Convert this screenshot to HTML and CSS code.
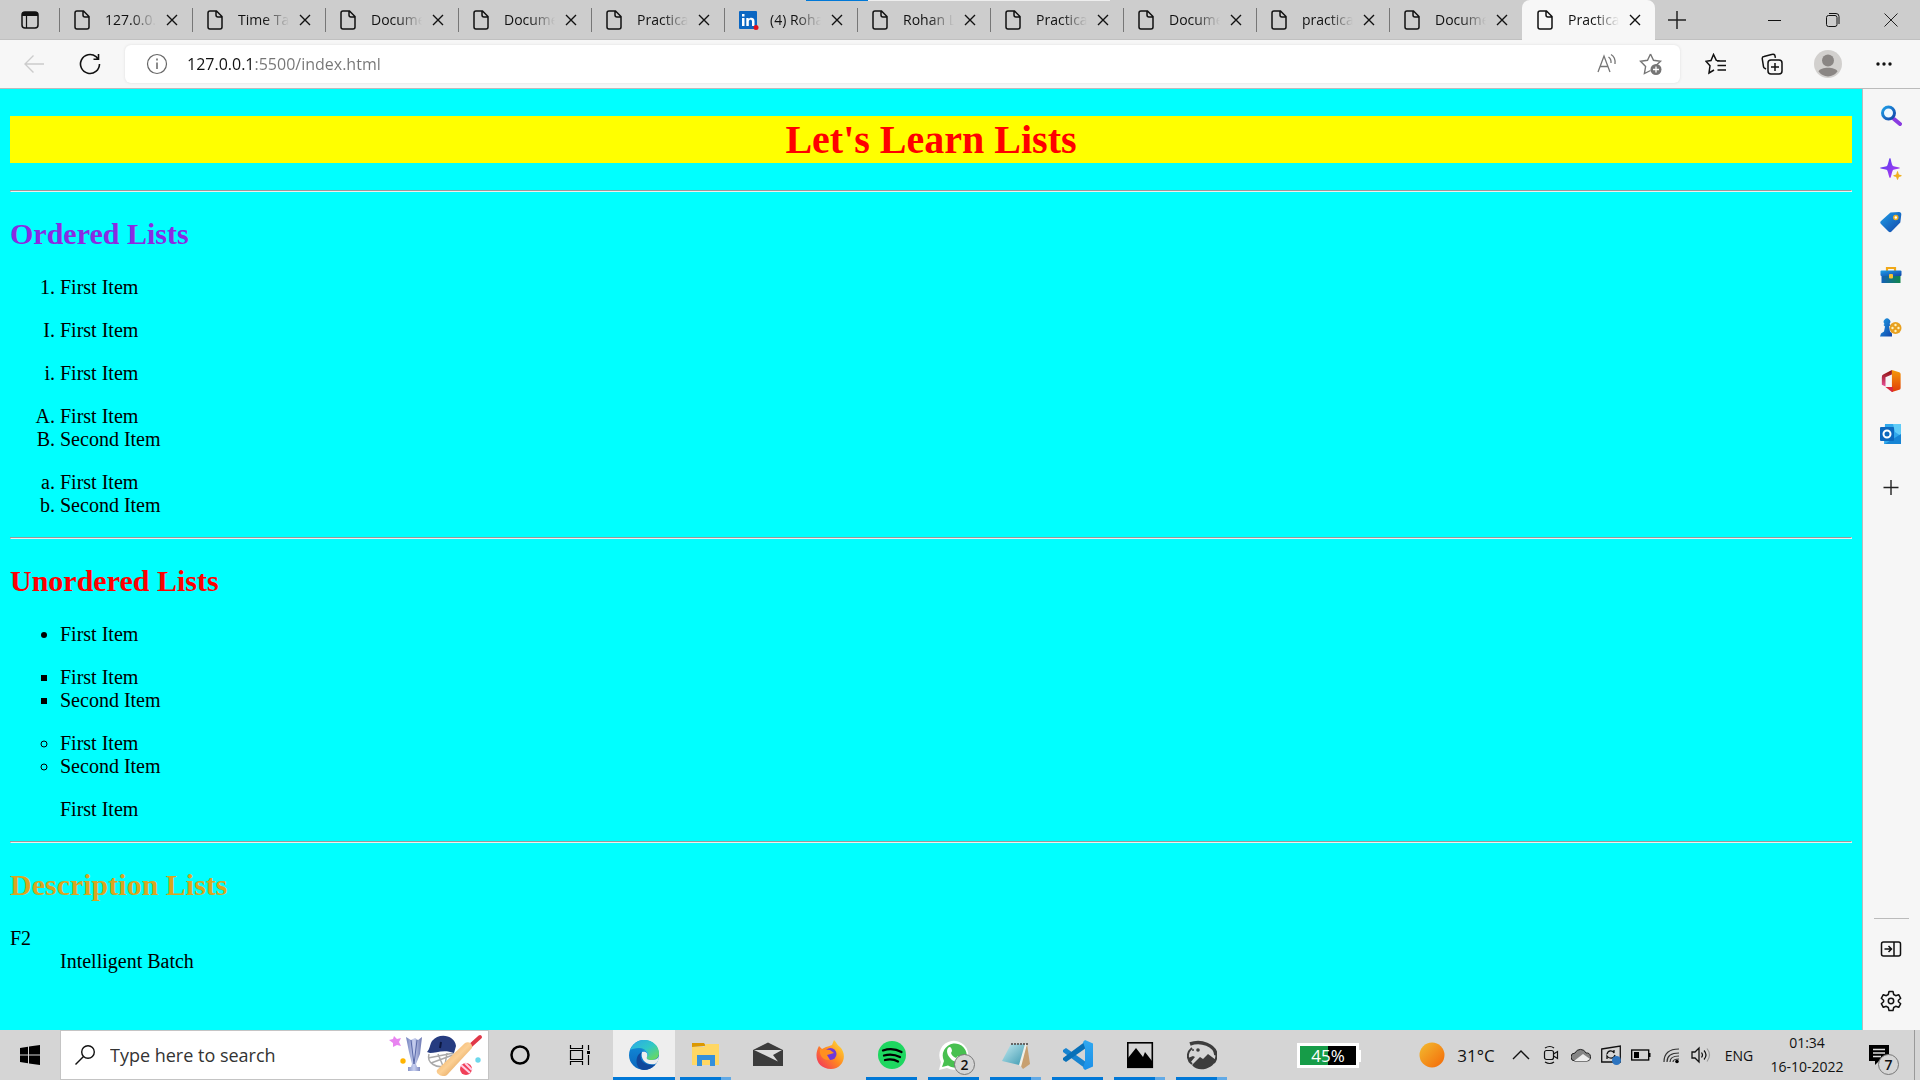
FILE: index.html
```html
<!DOCTYPE html>
<html lang="en">
<head>
<meta charset="utf-8">
<title>Practical - Lists</title>
<link rel="stylesheet" href="styles.css">
</head>
<body>
<svg class="defs" aria-hidden="true">
  <defs>
    <symbol id="file" viewBox="0 0 16 20"><path d="M3 1h6.500L15 6.500V17a2 2 0 0 1-2 2H3a2 2 0 0 1-2-2V3a2 2 0 0 1 2-2zM9 1v4a2 2 0 0 0 2 2h4" fill="none" stroke="#111" stroke-width="1.500"/></symbol>
    <symbol id="x" viewBox="0 0 12 12"><path d="M1 1l10 10M11 1L1 11" fill="none" stroke="#111" stroke-width="1.400"/></symbol>
    <linearGradient id="gBlue" x2="1" y2="1"><stop stop-color="#1fa0e8"/><stop offset="1" stop-color="#1243a8"/></linearGradient>
    <linearGradient id="gPurple" x2="1" y2="1"><stop stop-color="#4a3cf0"/><stop offset="1" stop-color="#c03cf0"/></linearGradient>
    <linearGradient id="gBox" x2="1"><stop stop-color="#1460b8"/><stop offset="1" stop-color="#10864a"/></linearGradient>
    <linearGradient id="gOffice" x2="0" y2="1"><stop stop-color="#f59a08"/><stop offset="1" stop-color="#e03c08"/></linearGradient>
    <linearGradient id="gOffice2" x2="0" y2="1"><stop stop-color="#8c1008"/><stop offset="1" stop-color="#e8509a"/></linearGradient>
    <linearGradient id="gEdge" x2="1" y2="1"><stop stop-color="#2aa8e8"/><stop offset=".5" stop-color="#30c8c8"/><stop offset="1" stop-color="#78dc48"/></linearGradient>
    <linearGradient id="gEdge2" x2="0" y2="1"><stop stop-color="#1290dc"/><stop offset="1" stop-color="#0c66bc"/></linearGradient>
    <linearGradient id="gFire" x1="1" y1="0" x2="0" y2="1"><stop stop-color="#ffe83c"/><stop offset=".5" stop-color="#ff8820"/><stop offset="1" stop-color="#f02868"/></linearGradient>
    <linearGradient id="gSun" x2="1" y2="1"><stop stop-color="#f2bc30"/><stop offset="1" stop-color="#f46808"/></linearGradient>
    <linearGradient id="gNote" x2="1" y2="1"><stop stop-color="#c4ecf2"/><stop offset="1" stop-color="#3c98b0"/></linearGradient>
    <linearGradient id="gBat" x2="1" y2="1"><stop stop-color="#e89a48"/><stop offset=".5" stop-color="#fcd094"/><stop offset="1" stop-color="#c87828"/></linearGradient>
    <linearGradient id="gCup" x2="1"><stop stop-color="#7080bc"/><stop offset=".5" stop-color="#c8d0f0"/><stop offset="1" stop-color="#6874b0"/></linearGradient>
    <linearGradient id="gCode" x2="0" y2="1"><stop stop-color="#30a8f0"/><stop offset="1" stop-color="#1c90e8"/></linearGradient>
  </defs>
</svg>

<header class="browser">
  <div class="tabstrip">
    <button class="tabmenu" aria-label="Tab actions"><svg width="18" height="18" viewBox="0 0 18 18"><rect x="1" y="1" width="16" height="16" rx="3" fill="none" stroke="#111" stroke-width="1.500"/><path d="M1 5V3a2 2 0 0 1 2-2h12a2 2 0 0 1 2 2v2z" fill="#111"/><path d="M5.500 5v12" stroke="#111" stroke-width="1.200"/></svg></button>
    <nav class="tabs">
      <div class="tab"><svg class="fav"><use href="#file"/></svg><a href="#t1">127.0.0.</a><button aria-label="Close"><svg><use href="#x"/></svg></button></div>
      <div class="tab"><svg class="fav"><use href="#file"/></svg><a href="#t2">Time Ta</a><button aria-label="Close"><svg><use href="#x"/></svg></button></div>
      <div class="tab"><svg class="fav"><use href="#file"/></svg><a href="#t3">Docume</a><button aria-label="Close"><svg><use href="#x"/></svg></button></div>
      <div class="tab"><svg class="fav"><use href="#file"/></svg><a href="#t4">Docume</a><button aria-label="Close"><svg><use href="#x"/></svg></button></div>
      <div class="tab"><svg class="fav"><use href="#file"/></svg><a href="#t5">Practica</a><button aria-label="Close"><svg><use href="#x"/></svg></button></div>
      <div class="tab"><svg class="fav linkedin" viewBox="0 0 20 20"><rect width="18" height="18" y="1" rx="1" fill="#0a66c2"/><path d="M3 8h2.500v8H3zM3 4h2.500v2.500H3zM7.300 8h2.400v1.200C11 7 15.500 7.200 15.500 11v5H13v-4.500c0-2.400-3.200-2.200-3.200 0V16H7.300z" fill="#fff"/><circle cx="17" cy="17.500" r="2.500" fill="#e0101c"/></svg><a href="#t6">(4) Roha</a><button aria-label="Close"><svg><use href="#x"/></svg></button></div>
      <div class="tab"><svg class="fav"><use href="#file"/></svg><a href="#t7">Rohan L</a><button aria-label="Close"><svg><use href="#x"/></svg></button></div>
      <div class="tab"><svg class="fav"><use href="#file"/></svg><a href="#t8">Practica</a><button aria-label="Close"><svg><use href="#x"/></svg></button></div>
      <div class="tab"><svg class="fav"><use href="#file"/></svg><a href="#t9">Docume</a><button aria-label="Close"><svg><use href="#x"/></svg></button></div>
      <div class="tab"><svg class="fav"><use href="#file"/></svg><a href="#t10">practica</a><button aria-label="Close"><svg><use href="#x"/></svg></button></div>
      <div class="tab"><svg class="fav"><use href="#file"/></svg><a href="#t11">Docume</a><button aria-label="Close"><svg><use href="#x"/></svg></button></div>
      <div class="tab active"><svg class="fav"><use href="#file"/></svg><a href="#t12">Practica</a><button aria-label="Close"><svg><use href="#x"/></svg></button></div>
    </nav>
    <button class="newtab" aria-label="New tab"><svg width="18" height="18" viewBox="0 0 18 18"><path d="M9 0v18M0 9h18" stroke="#222" stroke-width="1.500"/></svg></button>
    <div class="winctl">
      <button aria-label="Minimize"><svg width="14" height="14" viewBox="0 0 14 14"><path d="M0 7.500h13" stroke="#111"/></svg></button>
      <button aria-label="Restore"><svg width="14" height="14" viewBox="0 0 14 14"><rect x=".5" y="2.500" width="10.500" height="11" rx="2" fill="none" stroke="#111"/><path d="M3 .5h7a3 3 0 0 1 3 3V11" fill="none" stroke="#111"/></svg></button>
      <button aria-label="Close window"><svg width="14" height="14" viewBox="0 0 14 14"><path d="M.5.500l13 13M13.500.500l-13 13" stroke="#222"/></svg></button>
    </div>
    <div class="progress"><span></span></div>
  </div>

  <div class="toolbar">
    <button aria-label="Back"><svg width="20" height="18" viewBox="0 0 20 18"><path d="M20 9H1M9.500.500L1 9l8.500 8.500" fill="none" stroke="#ccc" stroke-width="1.400"/></svg></button>
    <button aria-label="Refresh"><svg width="22" height="22" viewBox="0 0 22 22"><path d="M20.500 11A9.500 9.500 0 1 1 17 3.600L19 6M19.500 1v5.200h-5" fill="none" stroke="#111" stroke-width="1.600"/></svg></button>
    <div class="address">
      <button aria-label="Site information"><svg width="22" height="22" viewBox="0 0 22 22"><circle cx="11" cy="11" r="9.500" fill="none" stroke="#666" stroke-width="1.200"/><path d="M11 9.500V16M11 5.500v2" stroke="#666" stroke-width="1.500"/></svg></button>
      <input class="url" type="text" value="127.0.0.1:5500/index.html" aria-label="Address">
      <button aria-label="Read aloud"><svg width="20" height="22" viewBox="0 0 20 22"><path d="M1 19L7 3l6 16M3.200 13.500h7.600M11.500 4c2 1.500 2.800 3.500 2.500 6M14 1.500c3.500 2 4.500 5 4 9.500" fill="none" stroke="#757575" stroke-width="1.300"/></svg></button>
      <button aria-label="Add to favorites"><svg width="24" height="24" viewBox="0 0 24 24"><path d="M11.500 2l3 6.300 7 1-5 4.700M11.500 18.500L5.400 21.600l1.200-7L1.500 9.300l7-1 3-6.300" fill="none" stroke="#757575" stroke-width="1.400"/><circle cx="17" cy="17.500" r="5.500" fill="#757575"/><path d="M17 14.500v6M14 17.500h6" stroke="#fff" stroke-width="1.300"/></svg></button>
    </div>
    <div class="actions">
      <button aria-label="Favorites"><svg width="22" height="22" viewBox="0 0 22 22"><path d="M14.500 7.800l-3.200-.4L8.500 1.500 6 7.500l-5 .8 4 4.500-1 7.200 5-3M12 8h9M12.500 12.500H21M12.500 17H21" fill="none" stroke="#111" stroke-width="1.500"/></svg></button>
      <button aria-label="Collections"><svg width="22" height="22" viewBox="0 0 22 22"><rect x="7" y="7" width="14" height="14" rx="3" fill="none" stroke="#111" stroke-width="1.500"/><path d="M14 10v8M10 14h8M5 16l-1.500-.8a2 2 0 0 1-1-1.500L1.200 5.500a2 2 0 0 1 1.800-2L11.500 1.300a2 2 0 0 1 2.500 1.500l.4 2" fill="none" stroke="#111" stroke-width="1.500"/></svg></button>
      <button aria-label="Profile"><svg width="28" height="28" viewBox="0 0 28 28"><circle cx="14" cy="14" r="14" fill="#d2d0ce"/><circle cx="14" cy="10.500" r="6" fill="#8a8684"/><path d="M4.500 21.500c2-5 17-5 19 0A13 13 0 0 1 14 26.500a13 13 0 0 1-9.500-5z" fill="#8a8684"/></svg></button>
      <button aria-label="Settings and more"><svg width="18" height="6" viewBox="0 0 18 6"><g fill="#111"><circle cx="3" cy="3" r="1.700"/><circle cx="9" cy="3" r="1.700"/><circle cx="15" cy="3" r="1.700"/></g></svg></button>
    </div>
  </div>
</header>

<div class="workspace">
  <main class="page">
    <h1>Let's Learn Lists</h1>
    <hr>
    <h2 class="ordered">Ordered Lists</h2>
    <ol><li>First Item</li></ol>
    <ol type="I"><li>First Item</li></ol>
    <ol type="i"><li>First Item</li></ol>
    <ol type="A"><li>First Item</li><li>Second Item</li></ol>
    <ol type="a"><li>First Item</li><li>Second Item</li></ol>
    <hr>
    <h2 class="unordered">Unordered Lists</h2>
    <ul><li>First Item</li></ul>
    <ul class="square"><li>First Item</li><li>Second Item</li></ul>
    <ul class="circle"><li>First Item</li><li>Second Item</li></ul>
    <ul class="plain"><li>First Item</li></ul>
    <hr>
    <h2 class="description">Description Lists</h2>
    <dl><dt>F2</dt><dd>Intelligent Batch</dd></dl>
  </main>

  <aside class="sidebar">
    <button aria-label="Search"><svg viewBox="0 0 22 22"><path d="M14 14l6 5" stroke="#8a3ce0" stroke-width="4" stroke-linecap="round"/><circle cx="8.500" cy="8" r="6" fill="#eef8ff" stroke="url(#gBlue)" stroke-width="3"/></svg></button>
    <button aria-label="Discover"><svg viewBox="0 0 22 22"><path d="M10 0c1 0 1.500 7 3 8s7 1 7 2-6 1-7 2-2 8-3 8-2-7-3-8-7-1-7-2 6-1 7-2 2-8 3-8z" fill="url(#gPurple)"/><path d="M17.500 13c.6 0 1 3 1.500 3.500s3 .7 3 1.300-2.500.7-3 1.200-.9 3-1.500 3-.9-2.500-1.400-3-3.100-.6-3.100-1.200 2.600-.8 3.100-1.300.8-3.500 1.400-3.500z" fill="#f0b020"/></svg></button>
    <button aria-label="Shopping"><svg viewBox="0 0 22 22"><path d="M10.500 1.500L19 1c1.500 0 2.500 1 2.300 2.500l-1 8-8.800 9c-1 1-2 1-3 0L1 13c-1-1-1-2 0-3z" fill="url(#gBlue)"/><circle cx="15.800" cy="6.500" r="2" fill="#fff" stroke="#f0b020" stroke-width="1.500"/></svg></button>
    <button aria-label="Tools"><svg viewBox="0 0 22 22"><path d="M7 7V4h8v3" fill="none" stroke="#f0a818" stroke-width="2.200"/><path d="M1.500 11h19v8h-19z" fill="url(#gBox)"/><rect x=".5" y="6.500" width="21" height="5.500" rx="1" fill="url(#gBlue)"/><rect x="9" y="10" width="4" height="4.500" rx="1" fill="#f8c030"/></svg></button>
    <button aria-label="Games"><svg viewBox="0 0 22 22"><circle cx="15.500" cy="11" r="6" fill="#e8a020"/><g fill="#fff3c0"><circle cx="15.500" cy="8" r="1.200"/><circle cx="15.500" cy="14" r="1.200"/><circle cx="12.500" cy="11" r="1.200"/><circle cx="18.500" cy="11" r="1.200"/></g><path d="M0 19.500l1-3 3-2 1-5-1.500-1.500 1-1a3.300 3.300 0 1 1 5 0l1 1L9 9.500l1 5 2 2v3z" fill="url(#gBlue)"/></svg></button>
    <button aria-label="Office"><svg viewBox="0 0 22 24"><path d="M12 0L3 4.500a3 3 0 0 0-2 3V16l4 2V8l7-3z" fill="url(#gOffice2)"/><path d="M12 0l8 2.500a2 2 0 0 1 1.500 2v15a2 2 0 0 1-1.500 2L12 24V19z" fill="url(#gOffice)"/><path d="M5 18.500h8V24h-1z" fill="#d82840"/></svg></button>
    <button aria-label="Outlook"><svg viewBox="0 0 22 22"><path d="M5 1h16v20H4z" fill="#30a8ec"/><path d="M13 1h8v12l-6-4z" fill="#60ccf8"/><path d="M21 11v10H5z" fill="#1684d4"/><rect y="4" width="14" height="14" rx="1" fill="#0c68be"/><circle cx="7" cy="11" r="3.500" fill="none" stroke="#fff" stroke-width="2"/></svg></button>
    <button aria-label="Add"><svg viewBox="0 0 22 22"><path d="M11 4v15M3.500 11.500h15" stroke="#222" stroke-width="1.400"/></svg></button>
    <div class="foot">
      <button aria-label="Hide sidebar"><svg viewBox="0 0 22 22"><rect x="1.500" y="4" width="19" height="14" rx="2" fill="none" stroke="#111" stroke-width="1.500"/><path d="M14 4v14M4.500 11h7M8.500 8l3 3-3 3" fill="none" stroke="#111" stroke-width="1.500"/></svg></button>
      <button aria-label="Settings"><svg viewBox="0 0 22 22"><path d="M9 1.500h4l.7 3 2 1.200 3-1 2 3.600-2.300 2v1.400l2.300 2-2 3.600-3-1-2 1.200-.7 3H9l-.7-3-2-1.200-3 1-2-3.600 2.300-2v-1.400l-2.300-2 2-3.600 3 1 2-1.200z" fill="none" stroke="#111" stroke-width="1.500" stroke-linejoin="round"/><circle cx="11" cy="11" r="2.700" fill="none" stroke="#111" stroke-width="1.500"/></svg></button>
    </div>
  </aside>
</div>

<footer class="taskbar">
  <button class="start" aria-label="Start"><svg width="20" height="20" viewBox="0 0 20 20"><path d="M0 3l8-1.200V9.500H0zM9 1.600L20 0v9.500H9zM0 10.500h8v7.700L0 17zM9 10.500h11V20L9 18.400z"/></svg></button>
  <label class="search">
    <svg width="20" height="20" viewBox="0 0 20 20"><circle cx="13" cy="7" r="6.300" fill="none" stroke="#111" stroke-width="1.400"/><path d="M8.500 11.500L.5 19.500" stroke="#111" stroke-width="1.400"/></svg>
    <input type="text" placeholder="Type here to search" aria-label="Type here to search">
    <svg width="94" height="42" viewBox="0 0 94 42"><path d="M5 2l3 3 4-1-2 4 2 4-4-1-4 2 0-4-4-3 4-1z" fill="#e884f0"/><circle cx="14" cy="27" r="2.700" fill="#ffb400"/><path d="M17 3l5 3 4-2 3 2 4-3-2 17-4 10 1 3h3v4H19v-4h3l1-3-3-12z" fill="url(#gCup)"/><path d="M22 6l3 24 3-24" fill="none" stroke="#5868a8"/><path d="M40 20c-3 10 9 14 15 12l13-14M39 24l26-5M42 29l22-8M49 20l5 12M58 19l-2 12" fill="none" stroke="#aaa" stroke-width="1.500"/><path d="M38 18c3-3 3-8 5-11C50-2 66 1 67 12l-2 7c-10-4-18 0-24 0z" fill="#263c80"/><path d="M51 14l1-6" stroke="#0c1840" stroke-width="2"/><path d="M81 12l10-9" stroke="#e03848" stroke-width="4" stroke-linecap="round"/><path d="M48 36l28-27c4-2 8 1 7 5L58 41c-4 3-12-1-10-5z" fill="url(#gBat)"/><circle cx="77" cy="35" r="6" fill="#f04058"/><path d="M72 31l9 8M76 29l7 7" stroke="#ffd0e8" stroke-width="2"/><circle cx="89" cy="26" r="2.700" fill="#6cd8ec"/></svg>
  </label>
  <nav class="apps">
    <button aria-label="Cortana"><svg viewBox="0 0 30 30"><circle cx="15" cy="15" r="8.500" fill="none" stroke="#000" stroke-width="2.500"/></svg></button>
    <button aria-label="Task view"><svg viewBox="0 0 30 30"><path d="M3.500 5v3.500h12V5M3.500 25v-3.500h12V25M3.500 10.500h12v9h-12zM21.500 5v5M21.500 15v10" fill="none" stroke="#000" stroke-width="1.200"/><path d="M20 11h3v3h-3z"/></svg></button>
    <button class="current" aria-label="Edge"><svg viewBox="0 0 30 30"><circle cx="15" cy="15" r="15" fill="url(#gEdge2)"/><path d="M1 10C5 1 12 0 15 0c9 0 15 6 15 13 0 5-4 7-8 7-3 0-5-1-4-3 2-4-2-9-8-9-4 0-7 1-9 2z" fill="url(#gEdge)"/><path d="M13 12c-3 4-2 14 13 13-3 3-7 5-11 5C6 30 5 15 13 12z" fill="#10489c"/><path d="M13 12c5-1 6 2 5 5-1 2 1 3 4 3 4 0 7-1 8-4 0 4-2 7-4 8-9 2-15-5-13-12z" fill="#eee"/><path d="M19 17c2-3-1-8-6-7 4 0 6 3 6 7z" fill="#30b8dc"/></svg></button>
    <button class="open multi" aria-label="File Explorer"><svg viewBox="0 0 30 30"><path d="M1 3h12l2 3h-2L1 7z" fill="#dc9800"/><path d="M1 7h12l2-3h13v21H1z" fill="#ffd764"/><path d="M6 15h18v11h-5v-6h-8v6H6z" fill="#3490dc"/></svg></button>
    <button aria-label="Mail"><svg viewBox="0 0 30 30"><path d="M0 10l15-7.500L30 10v16H0z" fill="#3c3c3c"/><path d="M1 10h28l-9 5 5 6.500z" fill="#ddd"/></svg></button>
    <button aria-label="Firefox"><svg viewBox="0 0 30 30"><path d="M4 6l3 3 4-2c3-1 4-1 6-2l2-5c3 3 3 5 6 7 8 8 3 22-9 22C3 29-2 17 4 6z" fill="url(#gFire)"/><circle cx="15.500" cy="14" r="6" fill="#7038d8"/><path d="M5 9l10 1 4 3-7 2 3 5c-8 1-11-6-10-11z" fill="#ff9020"/></svg></button>
    <button class="open" aria-label="Spotify"><svg viewBox="0 0 30 30"><circle cx="15" cy="15" r="14" fill="#1ed760"/><path d="M6 10.500c6-2 13-1.500 18.500 1.500M7 15.500c5-1.500 11-1 16 1.500M8 20c4-1 9-.8 13 1.500" fill="none" stroke="#000" stroke-width="2.300" stroke-linecap="round"/></svg></button>
    <button class="open" aria-label="WhatsApp"><svg viewBox="0 0 30 30"><path d="M0 30l2-8A14.500 14.500 0 1 1 8 28z" fill="#fff"/><path d="M3 27l2-6a12 12 0 1 1 4 4.500z" fill="#48c050"/><path d="M9 8c3-3 4 2 4 3l-1 2c1 3 3 4 5 5l2-2c3 1 5 2 2 5-6 4-16-7-12-13z" fill="#fff"/></svg><span class="badge">2</span></button>
    <button class="open multi" aria-label="Notepad"><svg viewBox="0 0 30 30"><path d="M26 4l3 20-7 5-3-4z" fill="#c8a070"/><path d="M11 4h15l-6 23-3-3z" fill="#f0f0e8"/><path d="M10 4h14l-6 21L1 21z" fill="url(#gNote)"/><path d="M10 4h17" stroke="#666" stroke-width="2" stroke-dasharray="2 1"/></svg></button>
    <button class="open" aria-label="Visual Studio Code"><svg viewBox="0 0 30 30"><path d="M0 10l3-2 20 14v7L0 12z" fill="#1884d0"/><path d="M0 20l3 2L23 8V1L0 18z" fill="#0870b8"/><path d="M22 0l8 3.500v23L22 30l-2-2 2-6V8l-2-6z" fill="url(#gCode)"/></svg></button>
    <button class="open multi" aria-label="Photos"><svg viewBox="0 0 30 30"><rect x="2.800" y="2.800" width="24.500" height="24.500" fill="none" stroke="#000" stroke-width="1.600"/><path d="M3 18l8-10 7 9 2-5 7 9v6H3z"/></svg></button>
    <button class="open multi" aria-label="Gallery"><svg viewBox="0 0 30 30"><path d="M3 4C14 0 28 5 29 15" fill="none" stroke="#3c3c3c" stroke-width="3.500"/><path d="M5 8C-1 13 0 20 5 24M29 14c1 3 0 6-2 9" fill="none" stroke="#3c3c3c" stroke-width="2"/><path d="M1 18l5-2 2 1-5 6zM5 25l8-8 3 2 5-5 8 6c-3 9-18 13-24 5z" fill="#3c3c3c"/><circle cx="11" cy="10" r="1.800" fill="#3c3c3c"/><circle cx="6" cy="10" r="1" fill="#3c3c3c"/></svg></button>
  </nav>
  <div class="battery"><span>45%</span></div>
  <div class="tray">
    <button class="weather"><svg width="26" height="26" viewBox="0 0 26 26"><circle cx="13" cy="13" r="12.500" fill="url(#gSun)"/></svg>31°C</button>
    <button aria-label="Show hidden icons"><svg width="20" height="20" viewBox="0 0 20 20"><path d="M2 14l8-8 8 8" fill="none" stroke="#111" stroke-width="1.400"/></svg></button>
    <button aria-label="Meet now"><svg width="20" height="20" viewBox="0 0 20 20"><rect x="3.500" y="5.500" width="9" height="9" rx="2" fill="none" stroke="#111" stroke-width="1.200"/><path d="M12.500 9l4-2.500v7l-4-2.500M4 3q5-3 9 0M4 17q5 3 9 0" fill="none" stroke="#111" stroke-width="1.200"/></svg></button>
    <button aria-label="OneDrive"><svg width="20" height="20" viewBox="0 0 20 20"><path d="M4 16a4 4 0 0 1 0-8 6 6 0 0 1 11 0 4 4 0 0 1 1 8z" fill="#858585" stroke="#222"/><path d="M3 16l9-7 7 5-3 2z" fill="#ececec"/></svg></button>
    <button aria-label="Update"><svg width="20" height="20" viewBox="0 0 20 20"><path d="M.700 4L19.300 1v16L.700 17z" fill="none" stroke="#111" stroke-width="1.300"/><path d="M6 9c1-4 6-4 7-1V5M14 10c-1 4-6 4-8 1v3" fill="none" stroke="#111" stroke-width="1.300"/><circle cx="15.500" cy="15.500" r="4.500" fill="#2c74c0"/></svg></button>
    <button aria-label="Battery"><svg width="20" height="20" viewBox="0 0 20 20"><rect x=".7" y="5" width="17" height="10" fill="none" stroke="#000" stroke-width="1.300"/><path d="M3 7h5v6H3zM18 8h1.500v4H18z"/></svg></button>
    <button aria-label="Network"><svg width="20" height="20" viewBox="0 0 20 20"><path d="M3 17Q3 4 18 4M6 17Q6 8 18 8M9 17q0-6 9-6M12 17q0-3 6-3" fill="none" stroke="#333" stroke-width="1.200"/><circle cx="16" cy="16.500" r="1.800"/></svg></button>
    <button aria-label="Volume"><svg width="20" height="20" viewBox="0 0 20 20"><path d="M1 7h3l4-4v14l-4-4H1z" fill="none" stroke="#111" stroke-width="1.300"/><path d="M10.500 7.500q2 2.500 0 5M13 5.500q4 4.500 0 9" fill="none" stroke="#111" stroke-width="1.200"/><path d="M16 3.500q5 6.500 0 13" fill="none" stroke="#999" stroke-width="1.200"/></svg></button>
    <button class="lang">ENG</button>
    <button class="clock"><time>01:34</time><time>16-10-2022</time></button>
    <button class="notify" aria-label="Notifications"><svg width="20" height="20" viewBox="0 0 20 20"><path d="M0 0h20v16H10l-4 4v-4H0z"/><path d="M4 4.500h12M4 8h12M4 11.500h8" stroke="#ddd" stroke-width="1.300"/></svg><span class="badge">7</span></button>
    <button class="desktop" aria-label="Show desktop"></button>
  </div>
</footer>
</body>
</html>
```
FILE: styles.css
```css
* { box-sizing: border-box; }

body {
  margin: 0;
  min-height: 100vh;
  display: flex;
  flex-direction: column;
  font-family: "Open Sans", "Noto Sans", sans-serif;
  color: #111;
}

button {
  display: flex;
  align-items: center;
  justify-content: center;
  padding: 0;
  border: 0;
  background: none;
  color: inherit;
  font: inherit;
}

input { border: 0; outline: 0; padding: 0; background: none; min-width: 0; font: inherit; }
svg { display: block; flex: none; }
.defs { position: absolute; width: 0; height: 0; }

/* Tab strip */
.tabstrip {
  position: relative;
  display: flex;
  height: 40px;
  background: #cdcdcd;
  box-shadow: inset 0 -1px #c0c0c0;
}
.tabmenu { width: 59px; }
.tabs { display: flex; flex: 0 1 1596px; min-width: 0; }
.tab {
  position: relative;
  display: flex;
  flex: 1 1 0;
  min-width: 0;
  align-items: center;
  padding: 0 14px 0 15px;
}
.tab::before {
  content: "";
  position: absolute;
  left: 0;
  top: 8px;
  width: 1px;
  height: 24px;
  background: #777;
}
.fav { width: 16px; height: 20px; margin-right: 15px; }
.fav.linkedin { width: 20px; margin: 0 11px 0 0; }
.tab a {
  flex: 1;
  overflow: hidden;
  white-space: nowrap;
  font-size: 14px;
  line-height: 20px;
  color: #111;
  text-decoration: none;
  -webkit-mask-image: linear-gradient(to right, #000 50%, transparent);
  mask-image: linear-gradient(to right, #000 50%, transparent);
}
.tab button { width: 12px; margin-left: 10px; }
.tab button svg { width: 12px; height: 12px; }
.tab.active { background: #f7f7f7; border-radius: 8px 8px 0 0; }
.tab.active::before { display: none; }
.newtab { width: 44px; }
.winctl { display: flex; margin-left: auto; }
.winctl button { width: 58px; }
.progress {
  position: absolute;
  top: 0;
  left: 42%;
  width: 304px;
  height: 1px;
  background: #eee;
}
.progress span { display: block; width: 62px; height: 1px; background: #0078d7; }

/* Toolbar */
.toolbar {
  display: flex;
  align-items: center;
  height: 49px;
  padding: 0 8px 0 6px;
  background: #f7f7f7;
  border-bottom: 1px solid #bbb;
}
.toolbar > button { width: 56px; }
.address {
  display: flex;
  flex: 1;
  align-items: center;
  height: 38px;
  margin-left: 7px;
  padding: 0 7px 0 10px;
  border-radius: 6px;
  background: #fff;
  box-shadow: 0 0 3px #ddd;
}
.address button { width: 44px; }
.url {
  flex: 1;
  margin-left: 8px;
  font-size: 16px;
  line-height: 24px;
  color: transparent;
  background: linear-gradient(to right, #111 67px, #757575 67px);
  -webkit-background-clip: text;
  background-clip: text;
}
.actions { display: flex; margin-left: 8px; }
.actions button { width: 56px; }

/* Page and sidebar */
.workspace { display: flex; flex: 1; }
.page {
  flex: 1;
  padding: 27px 10px 0;
  background: aqua;
  color: #000;
  font: 20px/23px "Liberation Serif", "Times New Roman", serif;
}
.page h1 {
  margin: 0 0 27px;
  background: yellow;
  color: red;
  font-size: 40px;
  line-height: 47px;
  text-align: center;
}
.page h2 { margin: 25px 0; font-size: 30px; line-height: 34px; }
.page hr {
  margin: 20px 0;
  border: 1px solid;
  border-color: #9a9a9a #eee #eee #9a9a9a;
}
.page ol, .page ul, .page dl { margin: 20px 0; }
.page ol, .page ul { padding-left: 50px; }
.page dd { margin-left: 50px; }
.page .ordered { color: blueviolet; }
.page .unordered { color: red; }
.page .description { color: goldenrod; }
.square { list-style-type: square; }
.circle { list-style-type: circle; }
.plain { list-style-type: none; }

.sidebar {
  display: flex;
  flex-direction: column;
  align-items: center;
  gap: 9px;
  width: 58px;
  padding: 5px 1px 7px 0;
  border-left: 1px solid #bbb;
  background: #f6f6f6;
}
.sidebar button { width: 44px; height: 44px; }
.sidebar svg { width: 22px; height: 22px; }
.foot {
  display: flex;
  flex-direction: column;
  align-items: center;
  gap: 8px;
  width: 35px;
  margin-top: auto;
  padding-top: 8px;
  border-top: 1px solid #bbb;
}

/* Taskbar */
.taskbar { display: flex; height: 50px; background: #d5d5d5; }
.start { width: 60px; }
.search {
  display: flex;
  align-items: center;
  width: 429px;
  padding: 0 5px 0 14px;
  border: 1px solid #c4c4c4;
  background: #fff;
}
.search input { flex: 1; margin-left: 15px; font-size: 18px; }
.search input::placeholder { color: #333; opacity: 1; }
.apps { display: flex; }
.apps button { position: relative; width: 62px; }
.apps svg { width: 30px; height: 30px; }
.apps .current { background: #eee; border-bottom: 3px solid #0078d7; padding-top: 3px; }
.apps .open::after {
  content: "";
  position: absolute;
  left: 5px;
  right: 6px;
  bottom: 0;
  height: 3px;
  background: #0078d7;
}
.apps .multi::after { background: linear-gradient(to right, #0078d7 80%, #62aae6 80%); }
.badge {
  position: absolute;
  right: 10px;
  bottom: 5px;
  width: 21px;
  height: 21px;
  border: 1px solid #777;
  border-radius: 50%;
  background: #d5d5d5;
  font-size: 14px;
  line-height: 19px;
  font-weight: 600;
  text-align: center;
}
.battery {
  position: relative;
  align-self: center;
  width: 62px;
  height: 25px;
  margin-left: auto;
  border: 3px solid #fff;
  background: linear-gradient(to right, #169c48 50%, #000 50%);
  color: #fff;
  font-size: 17px;
  line-height: 19px;
  text-align: center;
}
.battery::after {
  content: "";
  position: absolute;
  right: -5px;
  top: 4px;
  width: 2px;
  height: 12px;
  background: #fff;
}
.tray { display: flex; margin-left: 49px; font-size: 14px; }
.tray button { width: 30px; }
.tray .weather { width: 98px; gap: 12px; font-size: 17px; }
.tray .lang { width: 46px; }
.tray .clock { flex-direction: column; width: 90px; gap: 2px; }
.clock time { line-height: 22px; }
.tray .notify { position: relative; width: 62px; padding-right: 8px; }
.notify .badge { right: 15px; }
.tray .desktop { width: 6px; border-left: 1px solid #999; }

@media (max-width: 1700px) {
  .apps button { width: 48px; }
  .search { width: 300px; }
  .battery { display: none; }
}
```
